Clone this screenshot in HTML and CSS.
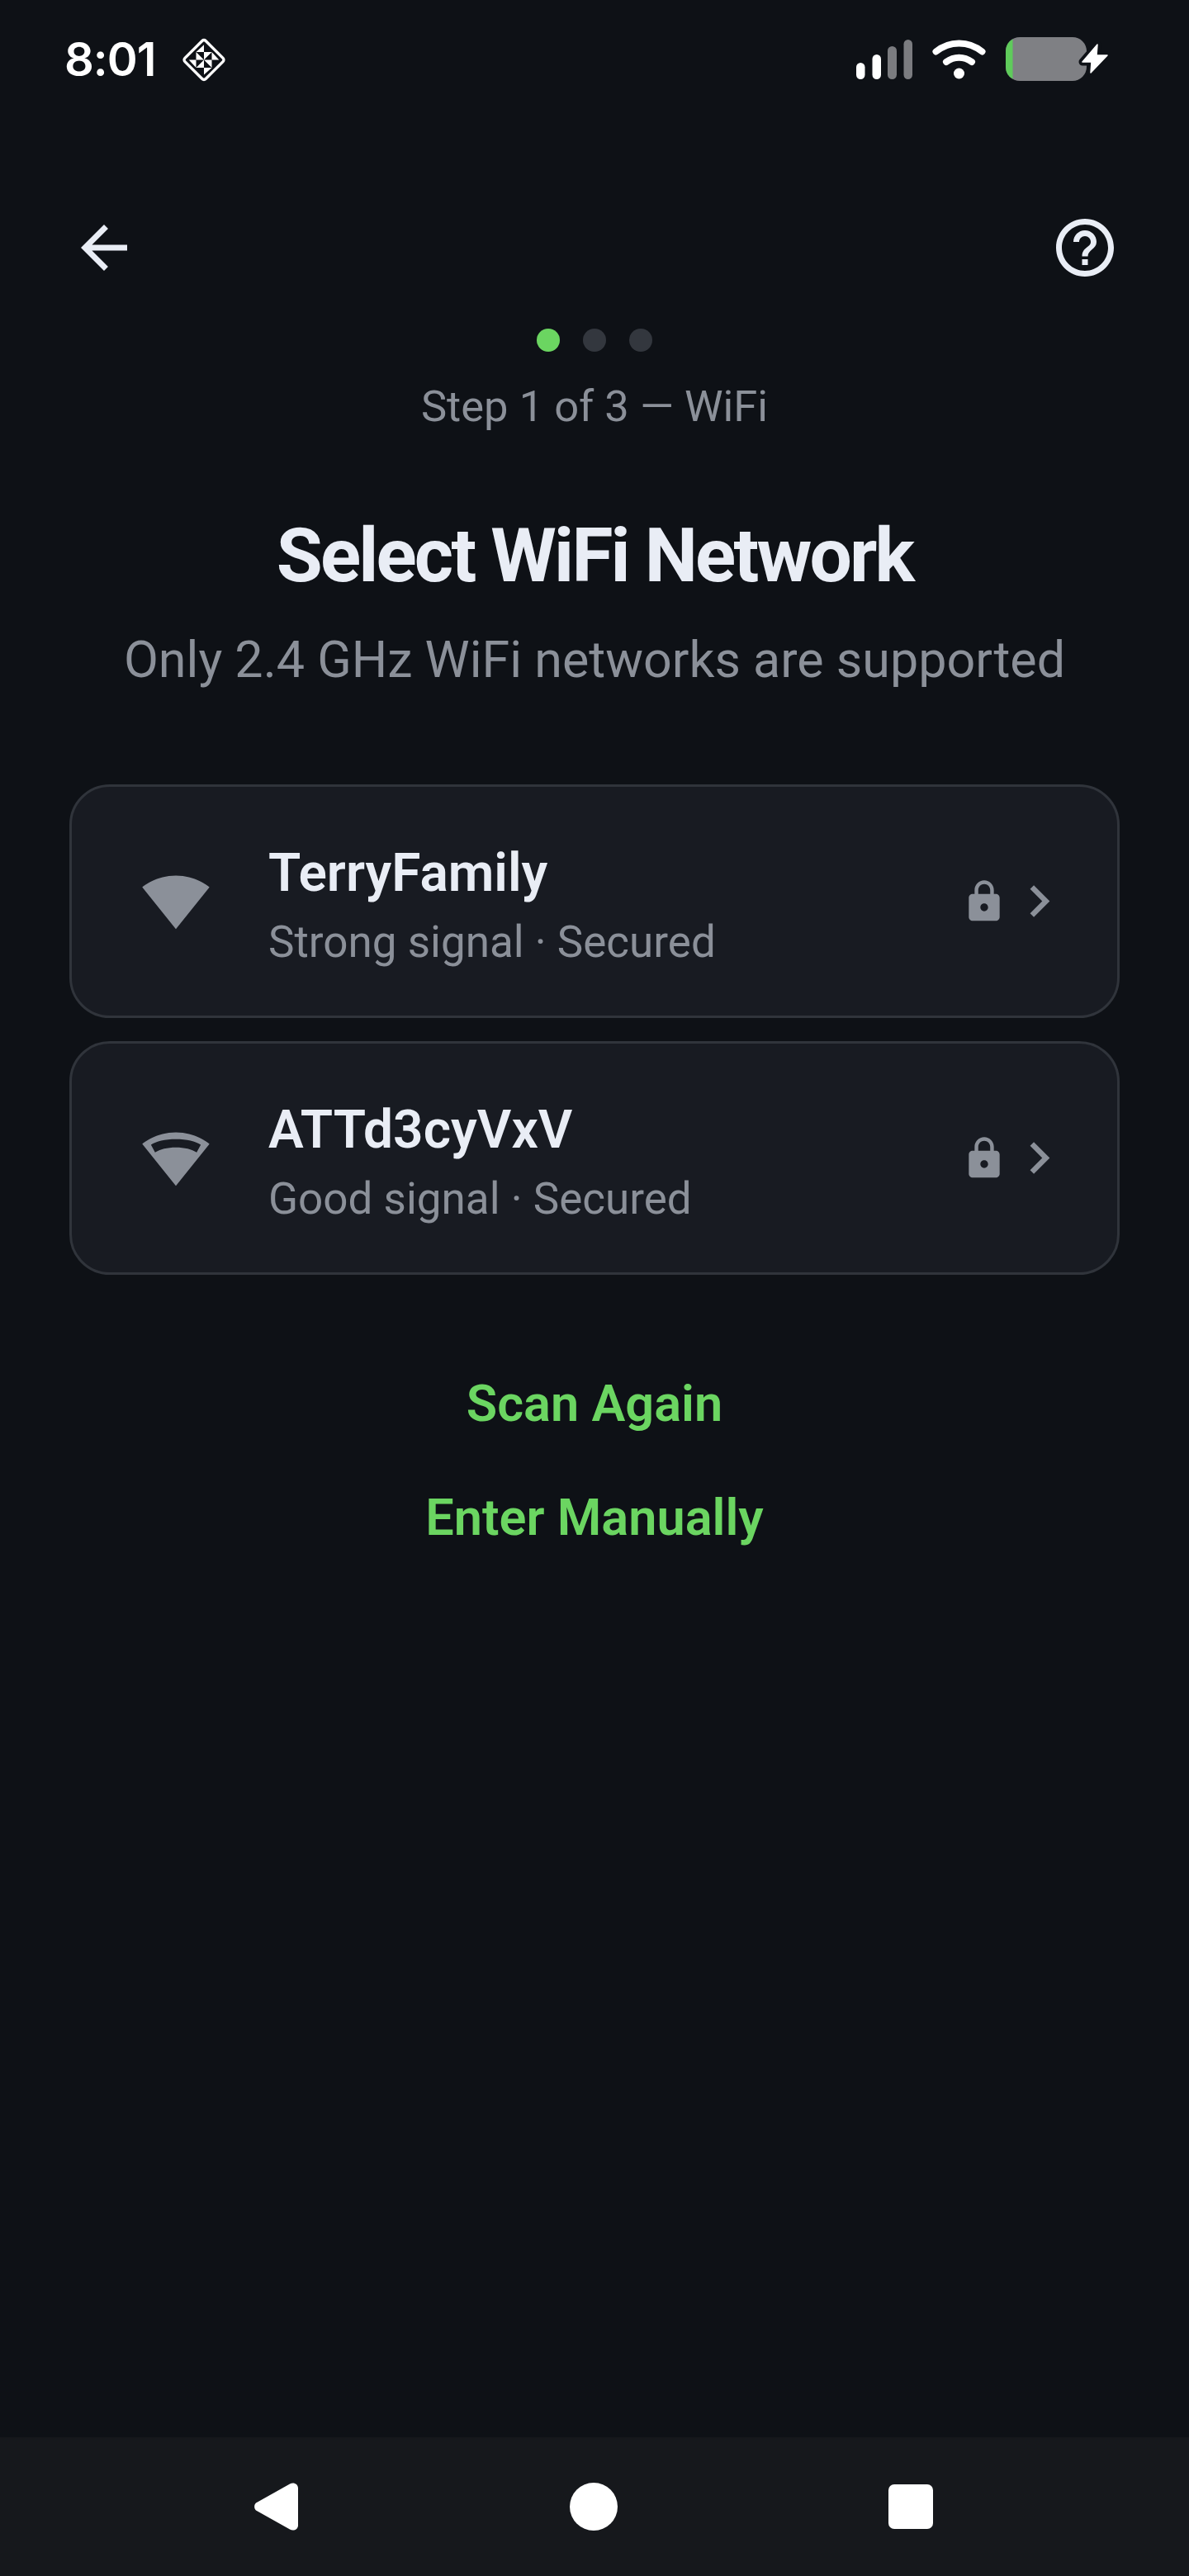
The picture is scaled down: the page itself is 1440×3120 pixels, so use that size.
FILE: index.html
```html
<!DOCTYPE html>
<html lang="en">
<head>
    <meta charset="UTF-8">
    <meta name="viewport" content="width=device-width, initial-scale=1.0">
    <title>Select WiFi Network</title>
    <link rel="stylesheet" href="styles.css">
</head>
<body>
    <div class="page">
        <div class="status-bar">
            <div class="status-left">
                <span class="clock">8:01</span>
                <svg class="status-logo" viewBox="0 0 54 54">
                    <rect x="9.200" y="9.700" width="35.600" height="35.600" rx="3" transform="rotate(45 27 27.500)" fill="none" stroke="#fff" stroke-width="3.400"/>
                    <path d="M27 9.300V18h-9.500zM45.300 27.500h-8.800V18zM27 45.500V37h9.500zM8.700 27.500h8.800V37z" fill="#fff"/>
                    <path d="M17.500 18v9.500H27zM27 18h9.500L27 27.500zM36.500 37v-9.500H27zM27 37h-9.500L27 27.500z" fill="#fff"/>
                </svg>
            </div>
            <div class="status-right">
                <svg class="signal" viewBox="0 0 68 48">
                    <rect x="0" y="28" width="10.500" height="20" rx="5.250" fill="#fff"/>
                    <rect x="19.500" y="18" width="10.500" height="30" rx="5.250" fill="#fff"/>
                    <rect x="38" y="8" width="11" height="40" rx="5.500" fill="#7b7c80"/>
                    <rect x="57.500" y="0" width="10.500" height="48" rx="5.250" fill="#7b7c80"/>
                </svg>
                <svg class="wifi" viewBox="0 0 65 48">
                    <path d="M4.500 14.500C21 1 44 1 60.500 14.500" fill="none" stroke="#fff" stroke-width="8" stroke-linecap="round"/>
                    <path d="M17 27c9.500-7 21.500-7 31 0" fill="none" stroke="#fff" stroke-width="8" stroke-linecap="round"/>
                    <circle cx="32.500" cy="41" r="6.500" fill="#fff"/>
                </svg>
                <svg class="battery" viewBox="0 0 124 53">
                    <rect width="98" height="53" rx="17" fill="#7f8084"/>
                    <path d="M0 17a17 17 0 0 1 8.500-14.700V50.700A17 17 0 0 1 0 36z" fill="#5fcb5b"/>
                    <path d="M111 9 93 30h11l-1 13 20-21h-13z" fill="#fff" stroke="#0e1116" stroke-width="9" stroke-linejoin="round"/>
                    <path d="M111 9 93 30h11l-1 13 20-21h-13z" fill="#fff" stroke="#fff" stroke-width="1.500" stroke-linejoin="round"/>
                </svg>
            </div>
        </div>

        <div class="top-bar">
            <svg class="top-icon" viewBox="0 0 24 24"><path d="M20 11H7.830l5.590-5.590L12 4l-8 8 8 8 1.410-1.410L7.830 13H20v-2z"/></svg>
            <svg class="top-icon" viewBox="0 0 24 24"><path d="M11 18h2v-2h-2v2zm1-16C6.480 2 2 6.480 2 12s4.480 10 10 10 10-4.480 10-10S17.520 2 12 2zm0 18c-4.410 0-8-3.590-8-8s3.590-8 8-8 8 3.590 8 8-3.590 8-8 8zm0-14c-2.210 0-4 1.790-4 4h2c0-1.100.9-2 2-2s2 .9 2 2c0 2-3 1.750-3 5h2c0-2.250 3-2.500 3-5 0-2.210-1.790-4-4-4z"/></svg>
        </div>

        <div class="steps">
            <span class="dot active"></span>
            <span class="dot"></span>
            <span class="dot"></span>
        </div>
        <p class="step-label">Step 1 of 3 — WiFi</p>

        <h1 class="title">Select WiFi Network</h1>
        <p class="subtitle">Only 2.4 GHz WiFi networks are supported</p>

        <div class="network-list">
            <div class="network-card">
                <svg class="wifi-icon" viewBox="0 0 24 24"><path d="M12.010 21.490 23.640 7c-.45-.34-4.930-4-11.640-4C5.280 3 .81 6.660.36 7l11.630 14.490.01.01.01-.01z"/></svg>
                <div class="network-info">
                    <div class="network-name">TerryFamily</div>
                    <div class="network-meta">Strong signal · Secured</div>
                </div>
                <svg class="lock-icon" viewBox="0 0 24 24"><path d="M18 8h-1V6c0-2.760-2.240-5-5-5S7 3.240 7 6v2H6c-1.100 0-2 .9-2 2v10c0 1.100.9 2 2 2h12c1.100 0 2-.9 2-2V10c0-1.100-.9-2-2-2zm-6 9c-1.100 0-2-.9-2-2s.9-2 2-2 2 .9 2 2-.9 2-2 2zm3.100-9H8.900V6c0-1.710 1.390-3.100 3.100-3.100 1.710 0 3.100 1.390 3.100 3.100v2z"/></svg>
                <svg class="chevron-icon" viewBox="0 0 24 24"><path d="M10 6 8.590 7.410 13.170 12l-4.580 4.590L10 18l6-6z"/></svg>
            </div>
            <div class="network-card">
                <svg class="wifi-icon" viewBox="0 0 24 24"><path fill-rule="evenodd" d="M12.010 21.490 23.640 7c-.45-.34-4.930-4-11.640-4C5.280 3 .81 6.660.36 7l11.630 14.490.01.01.01-.01zM3.380 7.290C5.200 6.100 8.200 5.380 12 5.380s6.800.72 8.620 1.910L19.190 9.950C17.500 8.900 15 8.240 12 8.240s-5.500.66-7.190 1.710z"/></svg>
                <div class="network-info">
                    <div class="network-name">ATTd3cyVxV</div>
                    <div class="network-meta">Good signal · Secured</div>
                </div>
                <svg class="lock-icon" viewBox="0 0 24 24"><path d="M18 8h-1V6c0-2.760-2.240-5-5-5S7 3.240 7 6v2H6c-1.100 0-2 .9-2 2v10c0 1.100.9 2 2 2h12c1.100 0 2-.9 2-2V10c0-1.100-.9-2-2-2zm-6 9c-1.100 0-2-.9-2-2s.9-2 2-2 2 .9 2 2-.9 2-2 2zm3.100-9H8.900V6c0-1.710 1.390-3.100 3.100-3.100 1.710 0 3.100 1.390 3.100 3.100v2z"/></svg>
                <svg class="chevron-icon" viewBox="0 0 24 24"><path d="M10 6 8.590 7.410 13.170 12l-4.580 4.590L10 18l6-6z"/></svg>
            </div>
        </div>

        <div class="actions">
            <button class="link-btn">Scan Again</button>
            <button class="link-btn">Enter Manually</button>
        </div>

        <div class="nav-bar">
            <div class="nav-cell">
                <svg class="nav-back" viewBox="0 0 54 58"><path d="M2 24.500 43 1.500c4-2.500 10-.5 10 5v45c0 5.500-6 7.500-10 5L2 33.500c-2.500-2.500-2.500-6.500 0-9z" fill="#fff"/></svg>
            </div>
            <div class="nav-cell"><span class="nav-home"></span></div>
            <div class="nav-cell"><span class="nav-recent"></span></div>
        </div>
    </div>
</body>
</html>
```

FILE: styles.css
```css
* {
    margin: 0;
    padding: 0;
    box-sizing: border-box;
}

body {
    font-family: Roboto, sans-serif;
    background: #0e1116;
}

.page {
    width: 1440px;
    height: 3120px;
    display: flex;
    flex-direction: column;
    overflow: hidden;
}

/* status bar */
.status-bar {
    height: 144px;
    padding: 45px 98px 0 78px;
    display: flex;
    justify-content: space-between;
    align-items: flex-start;
}

.status-left {
    display: flex;
    align-items: center;
    gap: 32px;
    height: 54px;
}

.clock {
    font-family: Inter, sans-serif;
    font-size: 56px;
    font-weight: 600;
    letter-spacing: -1px;
    line-height: 54px;
    color: #fff;
}

.status-logo {
    width: 54px;
    height: 54px;
}

.status-right {
    display: flex;
    align-items: flex-start;
}

.signal {
    width: 68px;
    height: 48px;
    margin-top: 3px;
}

.wifi {
    width: 65px;
    height: 48px;
    margin: 3px 0 0 24px;
}

.battery {
    width: 124px;
    height: 53px;
    margin-left: 24px;
}

/* header */
.top-bar {
    margin-top: 114px;
    padding: 0 84px;
    display: flex;
    justify-content: space-between;
}

.top-icon {
    width: 84px;
    height: 84px;
    fill: #e9edf5;
}

.steps {
    margin-top: 56px;
    display: flex;
    justify-content: center;
    gap: 28px;
}

.dot {
    width: 28px;
    height: 28px;
    border-radius: 50%;
    background: #33373e;
}

.dot.active {
    background: #6bd561;
}

.step-label {
    margin-top: 31px;
    font-size: 52.500px;
    line-height: 70px;
    text-align: center;
    color: #8b9099;
}

.title {
    margin-top: 96px;
    font-size: 91px;
    font-weight: 700;
    letter-spacing: -2.800px;
    line-height: 100px;
    text-align: center;
    color: #e9edf5;
}

.subtitle {
    margin-top: 41px;
    font-size: 61px;
    line-height: 70px;
    text-align: center;
    color: #8b9099;
}

/* network cards */
.network-list {
    margin-top: 116px;
    padding: 0 84px;
    display: flex;
    flex-direction: column;
    gap: 28px;
}

.network-card {
    height: 283px;
    padding: 0 56px 0 84px;
    display: flex;
    align-items: center;
    background: #181b22;
    border: 3.500px solid #30343b;
    border-radius: 49px;
}

.wifi-icon {
    width: 84px;
    height: 84px;
    fill: #8b9099;
}

.network-info {
    flex: 1;
    margin-left: 70px;
    padding-top: 8px;
}

.network-name {
    font-size: 64px;
    font-weight: 600;
    line-height: 84px;
    color: #e9edf5;
}

.network-meta {
    font-size: 53px;
    line-height: 70px;
    margin-top: 6px;
    color: #8b9099;
}

.lock-icon {
    width: 56px;
    height: 56px;
    fill: #8b9099;
}

.chevron-icon {
    width: 77px;
    height: 77px;
    fill: #8b9099;
}

/* text buttons */
.actions {
    margin-top: 114px;
    display: flex;
    flex-direction: column;
    align-items: center;
    gap: 54px;
}

.link-btn {
    height: 84px;
    border: none;
    background: none;
    font-family: Roboto, sans-serif;
    font-size: 61.250px;
    font-weight: 600;
    color: #6bd561;
}

/* android nav */
.nav-bar {
    margin-top: auto;
    height: 168px;
    padding-right: 2px;
    display: flex;
    justify-content: center;
    align-items: center;
    background: #16181c;
}

.nav-cell {
    width: 384px;
    display: flex;
    justify-content: center;
}

.nav-back {
    width: 54px;
    height: 58px;
}

.nav-home {
    width: 58px;
    height: 58px;
    border-radius: 50%;
    background: #fff;
}

.nav-recent {
    width: 54px;
    height: 54px;
    border-radius: 7px;
    background: #fff;
}
```
